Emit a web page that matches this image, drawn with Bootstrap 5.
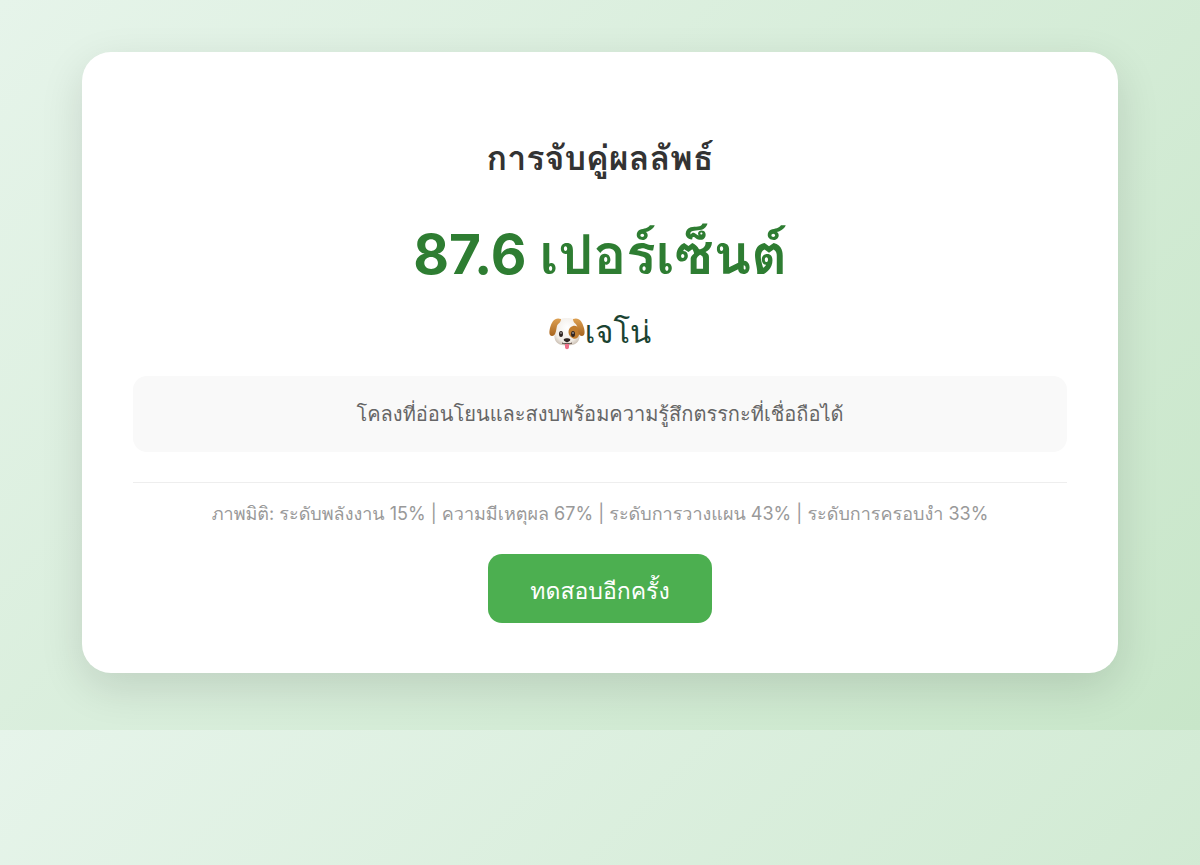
<!DOCTYPE html>
<html lang="th">
<head>
<meta charset="utf-8">
<meta name="viewport" content="width=device-width, initial-scale=1">
<title>การจับคู่ผลลัพธ์</title>
<link rel="stylesheet" href="https://cdn.jsdelivr.net/npm/bootstrap@5.3.0/dist/css/bootstrap.min.css">
<style>
body{font-family:Inter,"Liberation Sans",Loma,sans-serif;background:linear-gradient(135deg,#e6f4ea,#c8e6c9);color:#333}
.page-wrap{padding:52px 82px 57px}
.result-box{border-radius:29px;padding:74px 51px 50px;box-shadow:0 14px 44px rgba(0,0,0,.12)}
.result-title{font-size:34px;line-height:64px;font-weight:700}
.result-score{font-size:55px;line-height:96px;font-weight:700;color:#2e7d32;margin-top:16px}
.result-name{font-size:31px;line-height:60px;font-weight:500;color:#1b4332}
.result-name svg{width:36px;height:36px}
.result-text{background:#f9f9f9;color:#666;border-radius:14px;font-size:20px;line-height:36px;padding:20px;margin-top:14px}
.result-dims{border-top:1px solid #eee;color:#999;font-size:18px;line-height:30px;padding-top:16px;margin-top:30px}
.btn-again{background:#4caf50;color:#fff;border:0;border-radius:14px;font-size:23px;line-height:36px;padding:19px 42px 14px;margin-top:25px}
.btn-again:hover{background:#43a047;color:#fff}
</style>
</head>
<body>
<div class="page-wrap">
<main class="result-box bg-white text-center">
<h1 class="result-title mb-0">การจับคู่ผลลัพธ์</h1>
<p class="result-score mb-0">87.6 เปอร์เซ็นต์</p>
<h2 class="result-name mb-0 d-flex justify-content-center align-items-center"><svg viewBox="0 0 36 36" role="img" aria-label="สุนัข">
<defs><radialGradient id="fur" cx="50%" cy="35%" r="65%"><stop offset="0" stop-color="#fff"/><stop offset=".75" stop-color="#f1ece6"/><stop offset="1" stop-color="#cfc4b8"/></radialGradient>
<linearGradient id="ear" x1="0" y1="0" x2="0" y2="1"><stop offset="0" stop-color="#dda052"/><stop offset="1" stop-color="#a8651f"/></linearGradient></defs>
<path d="M18 4C10 3 6 9 6 17c-2 8 1 13 7 14 3 0 4 1 5 1s2-1 5-1c6-1 9-6 7-14C30 9 26 3 18 4z" fill="url(#fur)"/>
<path d="M24 12c5-1 8 4 6 9-1 4-5 5-8 2-4-3-3-10 2-11z" fill="#c17d2f"/>
<path d="M12 5C6 3 3 7 1 14c-1 4-1 8 2 8 4 0 4-6 5-10 1-3 4-3 4-7zM24 5c6-2 9 2 11 9 1 4 1 8-2 8-4 0-4-6-5-10-1-3-4-3-4-7z" fill="url(#ear)"/>
<ellipse cx="12" cy="20" rx="2" ry="3" fill="#302522"/><ellipse cx="24" cy="20" rx="2" ry="3" fill="#302522"/><circle cx="12" cy="19" r=".7" fill="#fff"/><circle cx="24" cy="19" r=".7" fill="#fff"/>
<path d="M15 25c1-1 5-1 6 0s-1 3-3 3-4-2-3-3z" fill="#302522"/><path d="M13 29c2 1 4 1 5 0 1 1 3 1 5 0" stroke="#4a3831" fill="none"/>
<path d="M16 30h4v3c0 3-4 3-4 0z" fill="#ef6f89"/></svg><span>เจโน่</span></h2>
<p class="result-text mb-0">โคลงที่อ่อนโยนและสงบพร้อมความรู้สึกตรรกะที่เชื่อถือได้</p>
<p class="result-dims mb-0">ภาพมิติ: ระดับพลังงาน 15% | ความมีเหตุผล 67% | ระดับการวางแผน 43% | ระดับการครอบงำ 33%</p>
<button type="button" class="btn btn-again">ทดสอบอีกครั้ง</button>
</main>
</div>
<script src="https://cdn.jsdelivr.net/npm/bootstrap@5.3.0/dist/js/bootstrap.bundle.min.js"></script>
</body>
</html>
